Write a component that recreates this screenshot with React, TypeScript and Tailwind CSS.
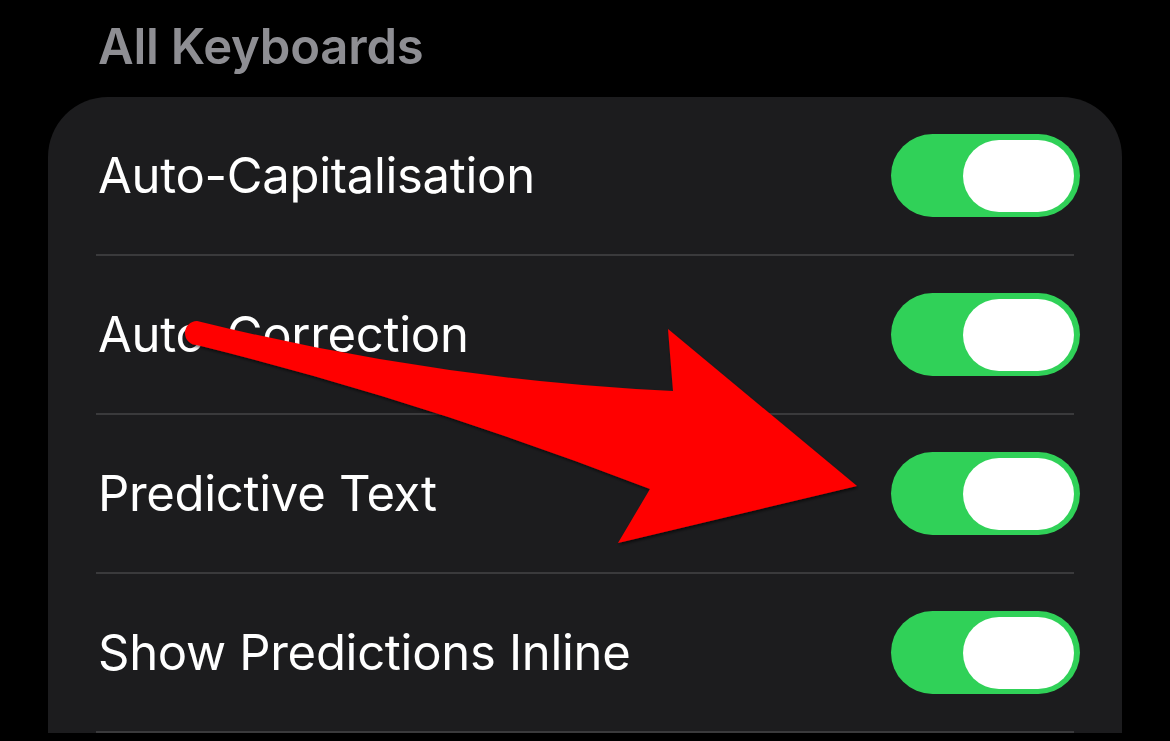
import React from "react";

const rows = [
  "Auto-Capitalisation",
  "Auto-Correction",
  "Predictive Text",
  "Show Predictions Inline",
];

function Toggle() {
  return (
    <div className="flex h-[83px] w-[189px] shrink-0 items-center justify-end rounded-full bg-[#30d158] pr-[6px]">
      <div className="h-[72px] w-[111px] rounded-full bg-white" />
    </div>
  );
}

function Arrow() {
  return (
    <svg
      className="pointer-events-none absolute left-0 top-0"
      width="1170"
      height="741"
      viewBox="0 0 1170 741"
    >
      <defs>
        <filter id="arrowShadow" x="-10%" y="-10%" width="120%" height="120%">
          <feDropShadow dx="1" dy="2" stdDeviation="1.5" floodColor="#000" floodOpacity="0.6" />
        </filter>
      </defs>
      <path
        d="M197 321 Q435 380 673 391 L668 329 L857 486 L618 543 L650 489 Q423 401 197 345 A12 12 0 0 1 197 321 Z"
        fill="#ff0000"
        filter="url(#arrowShadow)"
      />
    </svg>
  );
}

export default function App() {
  return (
    <div
      className="relative h-[741px] w-[1170px] overflow-hidden bg-black"
      style={{ fontFamily: "Inter, 'Noto Sans', sans-serif" }}
    >
      <div className="pl-[98px] pt-[17px] text-[49px] font-semibold leading-[60px] tracking-[-0.2px] text-[#8e8e93]">
        All Keyboards
      </div>
      <div className="ml-[48px] mt-[20px] w-[1074px] rounded-t-[60px] bg-[#1c1c1e]">
        {rows.map((label) => (
          <div key={label} className="pl-[50px]">
            <div className="flex h-[157px] items-center justify-between pr-[42px]">
              <span className="text-[49px] font-normal tracking-[-0.3px] text-white">{label}</span>
              <Toggle />
            </div>
            <div className="mr-[48px] ml-[-2px] h-[2px] bg-[#3a3a3c]" />
          </div>
        ))}
      </div>
      <Arrow />
    </div>
  );
}
